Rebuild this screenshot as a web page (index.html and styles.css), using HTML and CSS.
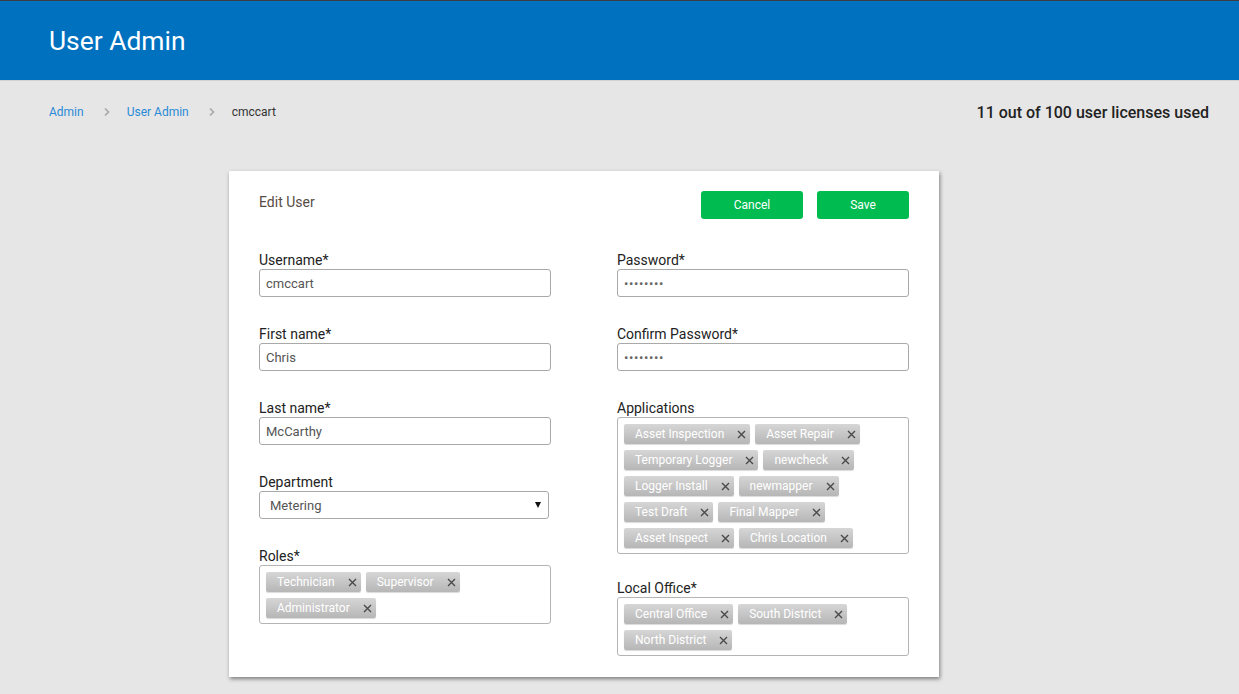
FILE: index.html
```html
<!DOCTYPE html>
<html>
<head>
<meta charset="utf-8">
<link rel="stylesheet" href="styles.css">
</head>
<body>
<div class="topline"></div>
<header class="header"><h1 class="title">User Admin</h1></header>
<div class="subbar">
  <nav class="crumbs">
    <a class="crumb-link">Admin</a>
    <svg class="chev" viewBox="0 0 8 10" width="8" height="10"><path d="M2 1.5 L5.5 5 L2 8.5" fill="none" stroke="#a8a8a8" stroke-width="1.6"/></svg>
    <a class="crumb-link">User Admin</a>
    <svg class="chev" viewBox="0 0 8 10" width="8" height="10"><path d="M2 1.5 L5.5 5 L2 8.5" fill="none" stroke="#a8a8a8" stroke-width="1.6"/></svg>
    <span class="crumb-current">cmccart</span>
  </nav>
  <div class="licenses">11 out of 100 user licenses used</div>
</div>

<main class="card">
  <div class="card-head">
    <div class="card-title">Edit User</div>
    <div class="actions">
      <button class="btn btn-cancel">Cancel</button>
      <button class="btn btn-save">Save</button>
    </div>
  </div>
  <div class="cols">
    <div class="col">
      <div class="field">
        <label class="label">Username*</label>
        <input class="input" type="text" value="cmccart">
      </div>
      <div class="field">
        <label class="label">First name*</label>
        <input class="input" type="text" value="Chris">
      </div>
      <div class="field">
        <label class="label">Last name*</label>
        <input class="input" type="text" value="McCarthy">
      </div>
      <div class="field">
        <label class="label">Department</label>
        <div class="select"><span>Metering</span><span class="arrow"></span></div>
      </div>
      <div class="field">
        <label class="label">Roles*</label>
        <div class="tags">
          <span class="tag">Technician<svg class="x" viewBox="0 0 9 9"><path d="M1 1L8 8M8 1L1 8"/></svg></span>
          <span class="tag">Supervisor<svg class="x" viewBox="0 0 9 9"><path d="M1 1L8 8M8 1L1 8"/></svg></span>
          <span class="tag">Administrator<svg class="x" viewBox="0 0 9 9"><path d="M1 1L8 8M8 1L1 8"/></svg></span>
        </div>
      </div>
    </div>
    <div class="col">
      <div class="field">
        <label class="label">Password*</label>
        <input class="input pw" type="text" value="••••••••">
      </div>
      <div class="field">
        <label class="label">Confirm Password*</label>
        <input class="input pw" type="text" value="••••••••">
      </div>
      <div class="field field-apps">
        <label class="label">Applications</label>
        <div class="tags">
          <span class="tag">Asset Inspection<svg class="x" viewBox="0 0 9 9"><path d="M1 1L8 8M8 1L1 8"/></svg></span>
          <span class="tag">Asset Repair<svg class="x" viewBox="0 0 9 9"><path d="M1 1L8 8M8 1L1 8"/></svg></span>
          <span class="tag">Temporary Logger<svg class="x" viewBox="0 0 9 9"><path d="M1 1L8 8M8 1L1 8"/></svg></span>
          <span class="tag">newcheck<svg class="x" viewBox="0 0 9 9"><path d="M1 1L8 8M8 1L1 8"/></svg></span>
          <span class="tag">Logger Install<svg class="x" viewBox="0 0 9 9"><path d="M1 1L8 8M8 1L1 8"/></svg></span>
          <span class="tag">newmapper<svg class="x" viewBox="0 0 9 9"><path d="M1 1L8 8M8 1L1 8"/></svg></span>
          <span class="tag">Test Draft<svg class="x" viewBox="0 0 9 9"><path d="M1 1L8 8M8 1L1 8"/></svg></span>
          <span class="tag">Final Mapper<svg class="x" viewBox="0 0 9 9"><path d="M1 1L8 8M8 1L1 8"/></svg></span>
          <span class="tag">Asset Inspect<svg class="x" viewBox="0 0 9 9"><path d="M1 1L8 8M8 1L1 8"/></svg></span>
          <span class="tag">Chris Location<svg class="x" viewBox="0 0 9 9"><path d="M1 1L8 8M8 1L1 8"/></svg></span>
        </div>
      </div>
      <div class="field">
        <label class="label">Local Office*</label>
        <div class="tags">
          <span class="tag">Central Office<svg class="x" viewBox="0 0 9 9"><path d="M1 1L8 8M8 1L1 8"/></svg></span>
          <span class="tag">South District<svg class="x" viewBox="0 0 9 9"><path d="M1 1L8 8M8 1L1 8"/></svg></span>
          <span class="tag">North District<svg class="x" viewBox="0 0 9 9"><path d="M1 1L8 8M8 1L1 8"/></svg></span>
        </div>
      </div>
    </div>
  </div>
</main>
</body>
</html>
```
FILE: styles.css
```css
* { box-sizing: border-box; }
html, body { margin: 0; padding: 0; }
body {
  background: #e6e6e6;
  font-family: Roboto, "Liberation Sans", Arial, sans-serif;
  color: #222;
  height: 694px;
  overflow: hidden;
}
.topline { height: 1px; background: #3b3d40; }
.header {
  height: 80px;
  background: #0071bf;
  border-bottom: 1px solid #d2d2d2;
  display: flex;
  align-items: center;
  padding-left: 49px;
}
.title {
  margin: 0;
  font-size: 26.4px;
  font-weight: 400;
  color: #fff;
  line-height: 30px;
  padding-top: 1px;
}
.subbar {
  height: 62px;
  display: flex;
  align-items: center;
  justify-content: space-between;
  padding: 0 30px 0 49px;
}
.crumbs {
  display: flex;
  align-items: center;
  font-size: 12px;
}
.crumb-link { color: #2a8ad6; }
.chev { margin: 0 16px 0 19px; }
.crumb-current { color: #333; }
.licenses {
  font-size: 16px;
  font-weight: 500;
  color: #222;
}
.card {
  margin: 28px 0 0 229px;
  width: 710px;
  background: #fff;
  box-shadow: 1px 2px 4px rgba(0,0,0,0.45);
  padding: 20px 30px 21px;
}
.card-head {
  display: flex;
  justify-content: space-between;
  align-items: flex-start;
  height: 28px;
  margin-bottom: 33px;
}
.card-title {
  font-size: 14px;
  color: #574c44;
  line-height: 20px;
  padding-top: 1px;
}
.actions { display: flex; gap: 14px; }
.btn {
  height: 28px;
  border: none;
  border-radius: 3px;
  background: #00bb50;
  color: #fff;
  font-family: Roboto, "Liberation Sans", Arial, sans-serif;
  font-size: 12px;
  padding: 0;
}
.btn-cancel { width: 102px; }
.btn-save { width: 92px; }
.cols {
  display: grid;
  grid-template-columns: 292px 292px;
  column-gap: 66px;
}
.col { display: flex; flex-direction: column; }
.field { margin-bottom: 29px; display: flex; flex-direction: column; }
.field:last-child { margin-bottom: 0; }
.field-apps { margin-bottom: 26px; }
.label {
  font-size: 14px;
  line-height: 17px;
  color: #222;
}
.input {
  height: 28px;
  width: 292px;
  border: 1px solid #a9a9a9;
  border-radius: 3px;
  padding: 0 6px;
  font-family: Roboto, "Liberation Sans", Arial, sans-serif;
  font-size: 13px;
  color: #555;
  outline: none;
  background: #fff;
}
.pw { font-size: 13px; letter-spacing: 0.6px; color: #666; }
.select {
  height: 28px;
  width: 290px;
  border: 1px solid #a9a9a9;
  border-radius: 3px;
  padding: 0 7px 0 10px;
  display: flex;
  align-items: center;
  justify-content: space-between;
  font-size: 13px;
  color: #555;
}
.arrow {
  width: 0; height: 0;
  border-left: 3.5px solid transparent;
  border-right: 3.5px solid transparent;
  border-top: 6px solid #111;
}
.tags {
  width: 292px;
  border: 1px solid #b4b4b4;
  border-radius: 3px;
  padding: 6px 6px 5px;
  display: flex;
  flex-wrap: wrap;
  gap: 6px 5px;
  align-content: flex-start;
}
.tag {
  height: 20px;
  display: inline-flex;
  align-items: center;
  padding: 0 4px 0 11px;
  border-radius: 2px;
  background: linear-gradient(#d6d6d6, #b6b6b6);
  color: #fff;
  font-size: 12px;
  box-shadow: 0 1px 1px rgba(0,0,0,0.15);
}
.x {
  width: 9px;
  height: 9px;
  margin-left: 13px;
  stroke: #4a4a4a;
  stroke-width: 1.4;
  fill: none;
}
```
